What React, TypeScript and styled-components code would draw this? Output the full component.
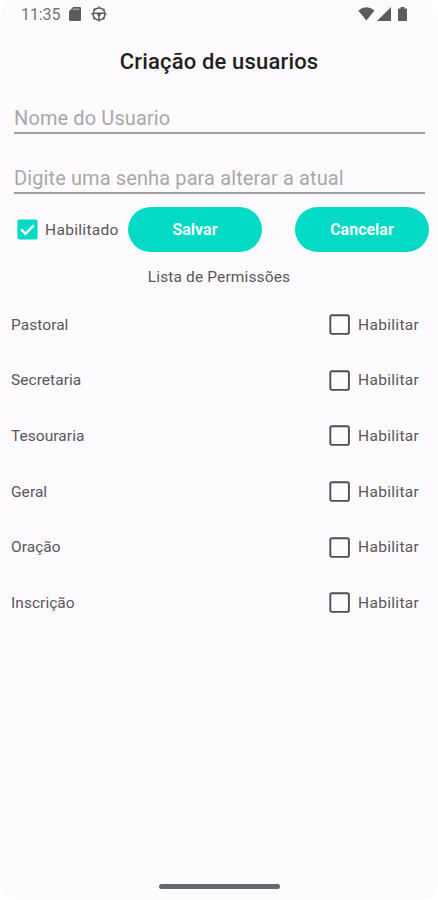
import React, { useState } from "react";
import styled, { createGlobalStyle } from "styled-components";

const GlobalStyle = createGlobalStyle`
  * { box-sizing: border-box; }
  html, body { margin: 0; padding: 0; background: #fff; }
  body { font-family: Roboto, "Liberation Sans", sans-serif; overflow: hidden; }
`;

const Screen = styled.main`
  width: 438px;
  height: 900px;
  display: flex;
  flex-direction: column;
  background: #fefbff;
  border-radius: 18px;
  overflow: hidden;
`;

const StatusBar = styled.header`
  height: 28px;
  padding: 0 31px 0 21px;
  display: flex;
  align-items: center;
  justify-content: space-between;
  color: #5c5b5e;
`;

const StatusGroup = styled.div<{ $gap: number }>`
  display: flex;
  align-items: center;
  gap: ${(p) => p.$gap}px;
  svg { display: block; }
`;

const Clock = styled.span`
  width: 38px;
  padding-top: 2px;
  font-size: 16px;
  line-height: 26px;
  letter-spacing: -0.1px;
  color: #747376;
`;

const Title = styled.h1`
  margin: 17px 0 0;
  height: 33px;
  line-height: 33px;
  text-align: center;
  font-size: 22px;
  font-weight: 500;
  letter-spacing: 0.17px;
  color: #1f1e22;
`;

const Form = styled.form`
  display: flex;
  flex-direction: column;
`;

const Field = styled.input`
  margin: 26px 13px 0 14px;
  height: 30px;
  padding: 0;
  border: 0;
  border-bottom: 2px solid #a19fa3;
  border-radius: 0;
  outline: 0;
  background: transparent;
  font: 400 20px/28px Roboto, sans-serif;
  letter-spacing: 0.11px;
  color: #49454f;
  &::placeholder { color: #a9a7ab; opacity: 1; }
  & + & { margin-top: 30px; }
`;

const Actions = styled.div`
  margin-top: 13px;
  padding: 0 9px 0 17px;
  height: 45px;
  display: flex;
  align-items: center;
`;

const CheckLabel = styled.label<{ $width: number; $gap: number }>`
  width: ${(p) => p.$width}px;
  display: flex;
  align-items: center;
  gap: ${(p) => p.$gap}px;
  font-size: 15.5px;
  line-height: 22px;
  letter-spacing: 0.32px;
  white-space: nowrap;
  color: #58565a;
  svg { display: block; flex: none; }
`;

const HiddenInput = styled.input<{ $gap: number }>`
  appearance: none;
  width: 0;
  height: 0;
  margin: 0 ${(p) => -p.$gap}px 0 0;
`;

const Pill = styled.button`
  width: 134px;
  height: 45px;
  padding: 0;
  border: 0;
  border-radius: 23px;
  background: #03dac5;
  color: #f4fffe;
  font: 700 15.8px/45px Roboto, sans-serif;
  letter-spacing: 0.1px;
  & + & { margin-left: 33px; }
`;

const ListTitle = styled.h2`
  margin: 13px 0 0;
  height: 24px;
  line-height: 24px;
  text-align: center;
  font-size: 15.5px;
  font-weight: 400;
  letter-spacing: 0.14px;
  color: #58565a;
`;

const List = styled.ul`
  list-style: none;
  margin: 8px 0 0;
  padding: 0 17px 0 11px;
`;

const Row = styled.li`
  height: 55.6px;
  display: flex;
  align-items: center;
  justify-content: space-between;
`;

const RowName = styled.span`
  font-size: 15.5px;
  line-height: 22px;
  letter-spacing: 0.05px;
  color: #58565a;
`;

const HomeArea = styled.footer`
  margin-top: auto;
  height: 27px;
  display: flex;
  justify-content: center;
  align-items: center;
`;

const HomeHandle = styled.div`
  width: 121px;
  height: 5px;
  border-radius: 3px;
  background: #68666a;
`;

function CheckMark({ checked }: { checked: boolean }) {
  return checked ? (
    <svg width="21" height="21" viewBox="0 0 21 21">
      <rect x="0.4" y="0.4" width="20.2" height="20.2" rx="2" fill="#03dac5" />
      <path d="M4.2 10.7l4.2 4.2 8.4-8.6" fill="none" stroke="#fff" strokeWidth="2.4" />
    </svg>
  ) : (
    <svg width="21" height="21" viewBox="0 0 21 21">
      <rect x="1.3" y="1.3" width="18.6" height="18.6" rx="1.6" fill="none" stroke="#504e53" strokeWidth="1.9" />
    </svg>
  );
}

interface CheckProps {
  label: string;
  width: number;
  gap: number;
  initial?: boolean;
}

function Check({ label, width, gap, initial = false }: CheckProps) {
  const [checked, setChecked] = useState(initial);
  return (
    <CheckLabel $width={width} $gap={gap}>
      <HiddenInput $gap={gap} type="checkbox" checked={checked} onChange={() => setChecked(!checked)} />
      <CheckMark checked={checked} />
      {label}
    </CheckLabel>
  );
}

const SdCard = () => (
  <svg width="12" height="14" viewBox="0 0 12 14">
    <path d="M4.2 0H10.8Q12 0 12 1.2V12.8Q12 14 10.8 14H1.2Q0 14 0 12.8V4.2Z" fill="currentColor" />
    <path d="M3.6 2.2h6.6" stroke="#a3a1a5" strokeWidth="1.4" />
  </svg>
);

const Wheel = () => (
  <svg width="16" height="16" viewBox="0 0 16 16" fill="none" stroke="currentColor">
    <circle cx="8" cy="8" r="6" strokeWidth="1.6" />
    <circle cx="8" cy="8" r="7" strokeWidth="1.2" strokeDasharray="1.8 3.7" strokeDashoffset="0.9" />
    <path d="M2.2 7.3h11.6M8 8v6" strokeWidth="1.6" />
    <path d="M5.4 7.3h5.2L9 10H7z" fill="currentColor" stroke="none" />
  </svg>
);

const Wifi = () => (
  <svg width="17" height="14" viewBox="0 0 17 14">
    <path d="M0.3 3.4Q8.3-2.8 16.5 3.4L8.4 13.6Z" fill="currentColor" />
  </svg>
);

const Signal = () => (
  <svg width="14" height="14" viewBox="0 0 14 14">
    <path d="M14 0V14H0Z" fill="currentColor" />
  </svg>
);

const Battery = () => (
  <svg width="9" height="14" viewBox="0 0 9 14">
    <path d="M2.6 0h3.8v1.5H8.2Q9 1.5 9 2.3V13.2Q9 14 8.2 14H.8Q0 14 0 13.2V2.3Q0 1.5.8 1.5H2.6Z" fill="currentColor" />
  </svg>
);

const Spaced = styled.span`
  margin-left: 5px;
`;

const permissions = ["Pastoral", "Secretaria", "Tesouraria", "Geral", "Oração", "Inscrição"];

export default function App() {
  return (
    <>
      <GlobalStyle />
      <Screen>
        <StatusBar>
          <StatusGroup $gap={10}>
            <Clock>11:35</Clock>
            <SdCard />
            <Wheel />
          </StatusGroup>
          <StatusGroup $gap={2}>
            <Wifi />
            <Signal />
            <Spaced><Battery /></Spaced>
          </StatusGroup>
        </StatusBar>
        <Title>Criação de usuarios</Title>
        <Form onSubmit={(e) => e.preventDefault()}>
          <Field placeholder="Nome do Usuario" />
          <Field type="password" placeholder="Digite uma senha para alterar a atual" />
          <Actions>
            <Check label="Habilitado" width={111} gap={7} initial />
            <Pill type="submit">Salvar</Pill>
            <Pill type="button">Cancelar</Pill>
          </Actions>
        </Form>
        <ListTitle>Lista de Permissões</ListTitle>
        <List>
          {permissions.map((name) => (
            <Row key={name}>
              <RowName>{name}</RowName>
              <Check label="Habilitar" width={92} gap={8} />
            </Row>
          ))}
        </List>
        <HomeArea>
          <HomeHandle />
        </HomeArea>
      </Screen>
    </>
  );
}
